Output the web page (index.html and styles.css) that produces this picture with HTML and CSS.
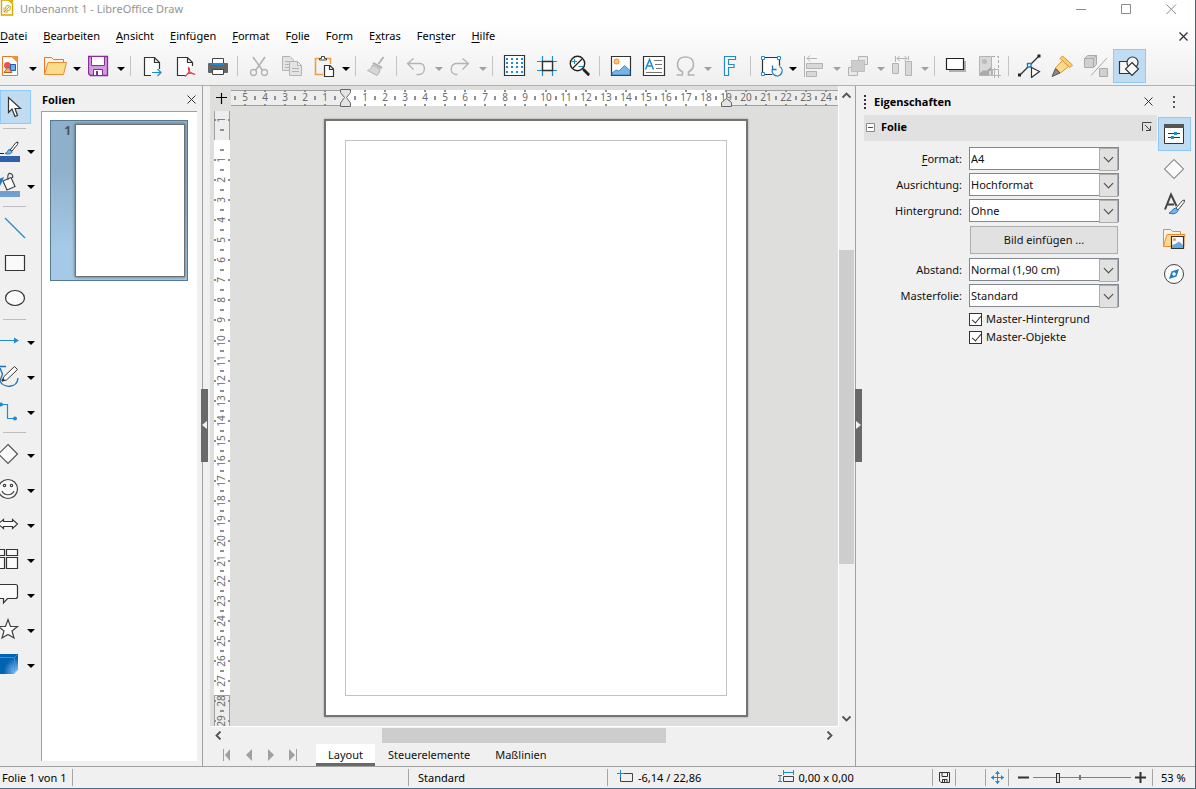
FILE: index.html
```html
<!DOCTYPE html>
<html lang="de">
<head>
<meta charset="utf-8">
<title>Unbenannt 1 - LibreOffice Draw</title>
<link rel="stylesheet" href="styles.css">
</head>
<body>
<header class="head">
  <div class="titlebar">
    <svg class="app-icon" width="14" height="18" viewBox="0 0 14 18"><path d="M2 0H9L12.500 3.500V15H1.500V0" fill="#fff" stroke="#d8a800" stroke-width="1.400"/><path d="M8 0H13V5Z" fill="#e0b400"/><circle cx="8" cy="8" r="2.500" fill="none" stroke="#d8a800"/><path d="M4 12L10 6M4 7.500V12H8" fill="none" stroke="#e09a30"/></svg>
    <span class="title">Unbenannt 1 - LibreOffice Draw</span>
    <div class="winbtns">
      <button aria-label="Minimieren"><svg width="11" height="11"><path d="M0 5.500H10" stroke="#8a8a8a"/></svg></button>
      <button aria-label="Maximieren"><svg width="11" height="11"><path d="M.5 .5H9.500V9.500H.5Z" fill="none" stroke="#8a8a8a"/></svg></button>
      <button aria-label="Schließen"><svg width="11" height="11"><path d="M.5 .5L10 10M10 .5L.5 10" stroke="#8a8a8a"/></svg></button>
    </div>
  </div>
  <nav class="menubar">
    <button><u>D</u>atei</button><button><u>B</u>earbeiten</button><button><u>A</u>nsicht</button><button><u>E</u>infügen</button><button><u>F</u>ormat</button><button>F<u>o</u>lie</button><button>Fo<u>r</u>m</button><button>E<u>x</u>tras</button><button>Fen<u>s</u>ter</button><button><u>H</u>ilfe</button>
    <button class="doc-close" aria-label="Dokument schließen"><svg width="9" height="9"><path d="M.5 .5L8.500 8.500M8.500 .5L.5 8.500" stroke="#333" stroke-width="1.300"/></svg></button>
  </nav>
  <div class="toolbar" role="toolbar" aria-label="Standard">
    <button class="tb" aria-label="Neu"><svg viewBox="0 0 24 24"><path d="M2.500 2.500H12L17.500 8V21.500H2.500Z" fill="#fff" stroke="#e8772a"/><path d="M11 2H18V9Z" fill="#f09030"/><circle cx="7.500" cy="11.500" r="3.500" fill="#e8505a"/><path d="M10.500 10.500H15.500V16.500H10.500Z" fill="#6cb0e8" stroke="#1e5fa8"/><path d="M4 18.500L8 13L12 18.500Z" fill="#f4b070" stroke="#b06020"/></svg></button><button class="dd" aria-label="Neu, Auswahl"></button>
    <button class="tb" aria-label="Öffnen"><svg viewBox="0 0 24 24"><path d="M.5 20.500V3.500H7.500L9.500 5.500H19.500V9" fill="#fdf3e2" stroke="#e8772a"/><path d="M.5 20.500L4 8.500H22.500L19.500 20.500Z" fill="#f9dc8c" stroke="#f08a32"/></svg></button><button class="dd" aria-label="Öffnen, Auswahl"></button>
    <button class="tb" aria-label="Speichern"><svg viewBox="0 0 24 24"><path d="M.5 2.500H19.500V21.500H2.500L.5 19.500Z" fill="#d49ae0" stroke="#8b2a9c" stroke-width="1.300"/><path d="M3.500 2.500H16.500V11.500H3.500Z" fill="#fff" stroke="#8b2a9c"/><path d="M5.500 21V15.500H14.500V21" fill="#fff" stroke="#8b2a9c"/><path d="M8 17H10V21H8Z" fill="#8b2a9c"/></svg></button><button class="dd" aria-label="Speichern, Auswahl"></button>
    <i class="sep"></i>
    <button class="tb" aria-label="Exportieren"><svg viewBox="0 0 24 24"><path d="M11 21.500H4.500V3.500H14.500L19.500 8.500V15M14.500 3.500V8.500H19.500" fill="#fdfdfd" stroke="#333" stroke-width="1.200"/><path d="M12 18.500H21M17.500 15L21 18.500L17.500 22" fill="none" stroke="#1e8bcd" stroke-width="1.200"/></svg></button>
    <button class="tb" aria-label="Als PDF exportieren"><svg viewBox="0 0 24 24"><path d="M12 21.500H4.500V3.500H14.500L19.500 8.500V12M14.500 3.500V8.500H19.500" fill="#fdfdfd" stroke="#333" stroke-width="1.200"/><path d="M12 22.500C17 18 17.500 15 15.500 13.500C15 17 18 19.500 22 20.500C18 17.500 14 20 12 22.500Z" fill="none" stroke="#e0404a" stroke-width="1.200"/></svg></button>
    <button class="tb" aria-label="Drucken"><svg viewBox="0 0 24 24"><path d="M6.500 9.500V4.500H17.500V9.500" fill="#fff" stroke="#444"/><rect x="2" y="9" width="20" height="10" rx="1" fill="#666"/><path d="M6 9H18V11H6Z" fill="#1e8bcd"/><path d="M6.500 15.500H17.500V20.500H6.500Z" fill="#fff" stroke="#444"/></svg></button>
    <i class="sep"></i>
    <button class="tb" aria-label="Ausschneiden"><svg viewBox="0 0 24 24" fill="none" stroke="#b3b3b3" stroke-width="1.300"><path d="M6 3L15.500 16.500M18 3L8.500 16.500" stroke-width="1.600"/><circle cx="6.500" cy="18.500" r="3"/><circle cx="17.500" cy="18.500" r="3"/></svg></button>
    <button class="tb" aria-label="Kopieren"><svg viewBox="0 0 24 24" fill="#e4e4e4" stroke="#b3b3b3"><path d="M2.500 2.500H10L13.500 6V16.500H2.500Z"/><path d="M9.500 7.500H17.500L21.500 11.500V21.500H9.500ZM17.500 7.500V11.500H21.500M12 14.500H19M12 17.500H19M5 7.500H9M5 10.500H9M5 13.500H9"/></svg></button>
    <button class="tb" aria-label="Einfügen"><svg viewBox="0 0 24 24"><path d="M10 20.500H2.500V4.500H17.500V10" fill="none" stroke="#ee9f40" stroke-width="1.600"/><path d="M6.500 6V4.500H8.500V2.500H11.500V4.500H13.500V6Z" fill="#fff" stroke="#444"/><path d="M11.500 11.500H17L20.500 15V22.500H11.500ZM16.500 11.500V15.500H20.500" fill="#fff" stroke="#333" stroke-width="1.200"/></svg></button><button class="dd" aria-label="Einfügen, Auswahl"></button>
    <i class="sep"></i>
    <button class="tb" aria-label="Format übertragen"><svg viewBox="0 0 24 24"><path d="M18.500 3L13.500 10" stroke="#b3b3b3" stroke-width="2"/><path d="M8 9L17 14" stroke="#b3b3b3" stroke-width="2.500"/><path d="M7.500 11C6.500 14.500 5 15.500 2.500 16.500L12 21.500C14 19.500 15 17.500 15 15Z" fill="#d5d5d5" stroke="#b3b3b3"/></svg></button>
    <i class="sep"></i>
    <button class="tb" aria-label="Rückgängig"><svg viewBox="0 0 24 24" fill="none" stroke="#b3b3b3" stroke-width="1.300"><path d="M7.500 4.500L1.500 9.500L7.500 15.500M1.500 9.500H14C20 9.500 20 20.500 13 20.500H10.500"/></svg></button><button class="dd off" aria-label="Rückgängig, Auswahl"></button>
    <button class="tb" aria-label="Wiederherstellen"><svg viewBox="0 0 24 24" fill="none" stroke="#b3b3b3" stroke-width="1.300"><path d="M12.500 4.500L18.500 9.500L12.500 15.500M18.500 9.500H7C0 9.500 -1 19.500 6 20.500H7.500"/></svg></button><button class="dd off" aria-label="Wiederherstellen, Auswahl"></button>
    <i class="sep"></i>
    <button class="tb" aria-label="Raster anzeigen"><svg viewBox="0 0 24 24"><path d="M2.500 1.500H22.500V21.500H2.500Z" fill="#fff" stroke="#333" stroke-width="1.200"/><path d="M4 5H21M4 9H21M4 13H21M4 18H21" stroke="#1e8bcd" stroke-width="2" stroke-dasharray="2 3"/></svg></button>
    <button class="tb" aria-label="Hilfslinien"><svg viewBox="0 0 24 24"><path d="M2 7.500H22M2 16.500H22M7.500 2V22M17.500 2V22" stroke="#1e8bcd" stroke-width="1.200"/><path d="M7.500 7.500H17.500V16.500H7.500Z" fill="#fff" stroke="#333" stroke-width="1.400"/></svg></button>
    <button class="tb" aria-label="Maßstab"><svg viewBox="0 0 24 24"><circle cx="9.500" cy="9.500" r="7.200" fill="#fff" stroke="#222" stroke-width="1.400"/><path d="M5 14L14 5M14.500 14.500L21 21.500" stroke="#222" stroke-width="1.300"/><path d="M15.500 15.500L21 21" stroke="#222" stroke-width="2.800"/><path d="M4 7.500H9M6.500 5V10M10.500 12.500H15" stroke="#1e8bcd" stroke-width="1.200"/></svg></button>
    <i class="sep"></i>
    <button class="tb" aria-label="Bild"><svg viewBox="0 0 24 24"><path d="M2.500 2.500H21.500V21.500H2.500Z" fill="#fff" stroke="#333" stroke-width="1.200"/><path d="M3 21V19L7 16L10 17L15.500 11.500L21 16.500V21Z" fill="#7ab4e6" stroke="#1e7cc0" stroke-width=".8"/><circle cx="7.500" cy="7.500" r="2.500" fill="#f8ca70" stroke="#ee8a30"/></svg></button>
    <button class="tb" aria-label="Textfeld"><svg viewBox="0 0 24 24"><path d="M1.500 2.500H22.500V21.500H1.500Z" fill="#fff" stroke="#333" stroke-width="1.200"/><path d="M3.500 15.500L7.500 5.500L11.500 15.500M5 12H10" fill="none" stroke="#1e8bcd" stroke-width="1.500"/><path d="M12 6.500H20M13 10.500H20M14 14.500H20M4 18.500H20" stroke="#777"/></svg></button>
    <button class="tb" aria-label="Sonderzeichen"><svg viewBox="0 0 24 24" fill="none" stroke="#b3b3b3" stroke-width="1.600"><path d="M1.500 21H7.500V18C0 14 1 3 10.500 3S21 14 13.500 18V21H19.500"/></svg></button><button class="dd off" aria-label="Sonderzeichen, Auswahl"></button>
    <button class="tb" aria-label="Fontwork"><svg viewBox="0 0 24 24"><path d="M5.500 2.500H16.500V5.500H9.500V10.500H15V13.500H9.500V21.500H5.500Z" fill="#fff" stroke="#1e8bcd" stroke-width="1.200"/></svg></button>
    <i class="sep"></i>
    <button class="tb" aria-label="Transformationen"><svg viewBox="0 0 24 24"><path d="M2.500 3.500H19.500V20.500H2.500Z" fill="#fdfdfd" stroke="#333" stroke-width="1.200"/><path d="M1.500 2.500H4.500V5.500H1.500ZM17.500 2.500H20.500V5.500H17.500ZM1.500 18.500H4.500V21.500H1.500Z" fill="#fff" stroke="#1e8bcd"/><circle cx="17" cy="17" r="6" fill="#f6f6f6"/><path d="M19.500 12.500A5 5 0 1 1 12.500 15M12.500 11.500V15.500H16.500" fill="none" stroke="#1e7cc0" stroke-width="1.300"/></svg></button><button class="dd" aria-label="Transformationen, Auswahl"></button>
    <button class="tb" aria-label="Ausrichten"><svg viewBox="0 0 24 24" fill="#d8d8d8" stroke="#b3b3b3"><path d="M.5 2V23M3 4.500H13M6 1.500L3 4.500L6 7.500" fill="none"/><path d="M2.500 9.500H18.500V14.500H2.500ZM2.500 17.500H12.500V22.500H2.500Z"/></svg></button><button class="dd off" aria-label="Ausrichten, Auswahl"></button>
    <button class="tb" aria-label="Anordnen"><svg viewBox="0 0 24 24" fill="#e8e8e8" stroke="#b3b3b3"><path d="M10.500 2.500H19.500V10.500H10.500ZM.500 13.500H9.500V21.500H.5Z"/><path d="M3.500 6.500H16.500V17.500H3.500Z" fill="#cdcdcd" stroke="#c0c0c0"/></svg></button><button class="dd off" aria-label="Anordnen, Auswahl"></button>
    <button class="tb" aria-label="Verteilen"><svg viewBox="0 0 24 24" fill="#d8d8d8" stroke="#b3b3b3"><path d="M.5 9.500H6.500V19.500H.5ZM13.500 7.500H19.500V21.500H13.500Z"/><path d="M3.500 2V8M16.500 2V6M5 4.500H15M7.500 2L5 4.500L7.500 7M12.500 2L15 4.500L12.500 7" fill="none"/></svg></button><button class="dd off" aria-label="Verteilen, Auswahl"></button>
    <i class="sep"></i>
    <button class="tb" aria-label="Schatten"><svg viewBox="0 0 24 24"><path d="M5 7H22V18H5Z" fill="#b0b0b0"/><path d="M2.500 4.500H19.500V15.500H2.500Z" fill="#fff" stroke="#222" stroke-width="1.200"/></svg></button>
    <button class="tb" aria-label="Zuschneiden"><svg viewBox="0 0 24 24"><path d="M2.500 2.500H14.500V21.500H2.500Z" fill="#d8d8d8" stroke="#b3b3b3"/><circle cx="7.500" cy="7.500" r="2.500" fill="#bbb"/><path d="M3 21V19L7 16L9 17L14 13V17H12V21Z" fill="#aaa"/><path d="M15 2.500H21.500V15" fill="none" stroke="#aaa" stroke-dasharray="3 2"/><path d="M17.500 14V24M14 15.500H22M15.500 15.500V21.500H24M21.500 15.500V24" fill="none" stroke="#b3b3b3"/></svg></button>
    <i class="sep"></i>
    <button class="tb" aria-label="Punkte bearbeiten"><svg viewBox="0 0 24 24"><path d="M2 21L21 2" stroke="#333" stroke-width="1.300"/><path d="M0 19.500H3V22.500H0ZM19.500 .5H22.500V3.500H19.500Z" fill="#222"/><path d="M9.500 9.500H13V13H9.500Z" fill="#fff" stroke="#1e7cc0" stroke-width="1.400"/><path d="M13.500 13.500V23.500L21.500 17.500Z" fill="#fff" stroke="#333" stroke-width="1.200"/></svg></button>
    <button class="tb" aria-label="Klebepunkte"><svg viewBox="0 0 24 24"><path d="M11.500 2L21.500 11L19 13.500L9 4.500Z" fill="#f9d26a" stroke="#f08a32"/><path d="M11.500 6.500L17.500 12.500L9.500 19L4.500 14Z" fill="#f9dc8c" stroke="#f08a32"/><path d="M4.500 14.500L9 19L1 22.500Z" fill="#888" stroke="#555"/></svg></button>
    <button class="tb" aria-label="Extrusion"><svg viewBox="0 0 24 24" fill="#d0d0d0" stroke="#aaa"><path d="M.5 4.500L3.500 1.500H12.500V10.500L9.500 13.500H.5ZM.5 4.500H9.500V13.500M9.500 4.500L12.500 1.500"/><path d="M7 21.500L23 4"/><path d="M15.500 14.500H23.500V22.500H15.500Z"/></svg></button>
    <button class="tb on" aria-label="Zeichenfunktionen"><svg viewBox="0 0 24 24" fill="#f8f8f8" stroke="#333" stroke-width="1.200"><path d="M2.500 7.500H14.500V19.500H2.500Z"/><circle cx="15.500" cy="8.500" r="5.500"/><path d="M15 8.500L21.500 15L15 21.500L8.500 15Z"/></svg></button>
  </div>
</header>

<main class="work">
  <div class="tools" role="toolbar" aria-label="Zeichnung">
    <div class="row"><button class="ic on" aria-label="Auswählen"><svg width="28" height="32" viewBox="0 0 28 32"><path d="M8.500 6.500V21.500L12 18L15 25.500L17.500 24.500L15 17.500H20.500Z" fill="#fff" stroke="#333" stroke-width="1.200"/></svg></button></div>
    <hr>
    <div class="row"><button class="ic" aria-label="Linienfarbe"><svg width="28" height="34" viewBox="0 -1 28 34"><path d="M0 19.500H4" stroke="#222"/><path d="M10 16L16 8.500L18 8L17.500 10.500L12 17Z" fill="#fff" stroke="#333"/><path d="M5 19.500C8 19 7 16.500 9 15.500L12 17.500C12 20 8 20.500 5 19.500Z" fill="#7ab4e6" stroke="#1e6fb0"/><path d="M0 22H20V28H0Z" fill="#2f62a8"/></svg></button><button class="dd" aria-label="Linienfarbe, Auswahl"></button></div>
    <div class="row"><button class="ic" aria-label="Füllfarbe"><svg width="28" height="34" viewBox="0 -1 28 34"><path d="M0 9.500L4 8L2 13L0 17Z" fill="#1e7cc0"/><path d="M3 12L11 8.500L15 17.500L7 21Z" fill="#fff" stroke="#444" stroke-width="1.200"/><path d="M8 11C7 5 9 4 10.500 4.500S13 7 12.500 9" fill="none" stroke="#444" stroke-width="1.200"/><path d="M0 22H20V28H0Z" fill="#729fcf"/></svg></button><button class="dd" aria-label="Füllfarbe, Auswahl"></button></div>
    <hr>
    <div class="row"><button class="ic" aria-label="Linie"><svg width="28" height="34" viewBox="0 0 28 34"><path d="M5 7L25 27" stroke="#1e8bcd" stroke-width="1.200"/></svg></button></div>
    <div class="row"><button class="ic" aria-label="Rechteck"><svg width="28" height="34" viewBox="0 0 28 34"><path d="M5.500 9.500H24.500V24.500H5.500Z" fill="#fafafa" stroke="#333" stroke-width="1.200"/></svg></button></div>
    <div class="row"><button class="ic" aria-label="Ellipse"><svg width="28" height="34" viewBox="0 0 28 34"><ellipse cx="15" cy="17" rx="9.500" ry="7.500" fill="#fafafa" stroke="#333" stroke-width="1.200"/></svg></button></div>
    <hr>
    <div class="row"><button class="ic" aria-label="Linien und Pfeile"><svg width="28" height="34" viewBox="0 0 28 34"><path d="M0 16.500H15" stroke="#1e8bcd"/><path d="M14 13.500L19 16.500L14 19.500Z" fill="#1e8bcd"/></svg></button><button class="dd" aria-label="Linien und Pfeile, Auswahl"></button></div>
    <div class="row"><button class="ic" aria-label="Kurven und Polygone"><svg width="28" height="34" viewBox="0 0 28 34"><path d="M0 7.500H6M0 9L2.500 15L0 22C3 29 17 30 18 19" fill="none" stroke="#1e6fb0" stroke-width="1.300"/><path d="M2 22L4 17.500L14.500 7.500L17.500 10.500L6.500 21Z" fill="#fff" stroke="#333"/><path d="M2 22L4 20Z" stroke="#333" stroke-width="2"/></svg></button><button class="dd" aria-label="Kurven, Auswahl"></button></div>
    <div class="row"><button class="ic" aria-label="Verbinder"><svg width="28" height="34" viewBox="0 0 28 34"><path d="M0 10.500H7.500V24.500H15" fill="none" stroke="#1e8bcd" stroke-width="1.200"/><circle cx="1" cy="10.500" r="2" fill="#1e8bcd"/><circle cx="15" cy="24.500" r="2" fill="#1e8bcd"/></svg></button><button class="dd" aria-label="Verbinder, Auswahl"></button></div>
    <hr>
    <div class="row"><button class="ic" aria-label="Standardformen"><svg width="28" height="34" viewBox="0 0 28 34"><path d="M8 7.500L17.500 17L8 26.500L-1.500 17Z" fill="#fafafa" stroke="#555" stroke-width="1.200"/></svg></button><button class="dd" aria-label="Standardformen, Auswahl"></button></div>
    <div class="row"><button class="ic" aria-label="Symbolformen"><svg width="28" height="34" viewBox="0 0 28 34" fill="none" stroke="#444" stroke-width="1.200"><circle cx="8" cy="17" r="9.500" fill="#fafafa"/><circle cx="4.500" cy="13.500" r="1.200"/><circle cx="11.500" cy="13.500" r="1.200"/><path d="M2 19C4 24 12 24 14 19"/></svg></button><button class="dd" aria-label="Symbolformen, Auswahl"></button></div>
    <div class="row"><button class="ic" aria-label="Blockpfeile"><svg width="28" height="34" viewBox="0 0 28 34"><path d="M-2 17L3.500 12.500V14.500H12.500V12.500L17.500 17L12.500 21.500V19.500H3.500V21.500Z" fill="#fafafa" stroke="#333" stroke-width="1.100"/></svg></button><button class="dd" aria-label="Blockpfeile, Auswahl"></button></div>
    <div class="row"><button class="ic" aria-label="Flussdiagramm"><svg width="28" height="34" viewBox="0 0 28 34" fill="#fafafa" stroke="#333" stroke-width="1.200"><path d="M-2 7.500H4.500V13.500H-2ZM6.500 7.500H17.500V13.500H6.500ZM-2 15.500H4.500V26.500H-2ZM6.500 15.500H17.500V26.500H6.500Z"/></svg></button><button class="dd" aria-label="Flussdiagramm, Auswahl"></button></div>
    <div class="row"><button class="ic" aria-label="Legenden"><svg width="28" height="34" viewBox="0 0 28 34"><path d="M-2 7.500H15.500Q17.500 7.500 17.500 9.500V19.500Q17.500 21.500 15.500 21.500H7.500L3.500 26V21.500H-2" fill="#fafafa" stroke="#333" stroke-width="1.200"/></svg></button><button class="dd" aria-label="Legenden, Auswahl"></button></div>
    <div class="row"><button class="ic" aria-label="Sterne"><svg width="28" height="34" viewBox="0 0 28 34"><path d="M8 7.500L10.500 14.500H17.500L12 19L14 26L8 22.500L2 26L4 19L-1.500 14.500H5.500Z" fill="#fafafa" stroke="#444" stroke-width="1.200"/></svg></button><button class="dd" aria-label="Sterne, Auswahl"></button></div>
    <div class="row"><button class="ic" aria-label="3D-Objekte"><svg width="28" height="34" viewBox="0 0 28 34"><defs><radialGradient id="g3" cx=".9" cy=".9" r=".7"><stop offset="0" stop-color="#8fc0ec"/><stop offset="1" stop-color="#0063b1"/></radialGradient></defs><path d="M0 7H18V23L14 27H0Z" fill="url(#g3)"/><path d="M0 10.500H14.500V24M14.500 10.500L17 8" fill="none" stroke="#3d8fd0"/></svg></button><button class="dd" aria-label="3D-Objekte, Auswahl"></button></div>
  </div>

  <aside class="slides">
    <div class="slides-head"><h2>Folien</h2><button aria-label="Folien schließen"><svg width="9" height="9"><path d="M.5 .5L8.500 8.500M8.500 .5L.5 8.500" stroke="#333"/></svg></button></div>
    <div class="slides-list"><div class="thumb"><span>1</span><div class="mini"></div></div></div>
  </aside>
  <div class="split left"><button class="grip" aria-label="Folienbereich ausblenden"><svg width="7" height="12"><path d="M6 2V10L1 6Z" fill="#f0f0f0"/></svg></button></div>

  <section class="editor">
    <div class="view">
      <div class="corner"><svg width="12" height="12"><path d="M0 4.500H11M5.500 0V11" stroke="#000" stroke-width="1.200"/></svg></div>
      <div class="hr"><svg id="hruler" width="607" height="20"></svg></div>
      <div class="vr"><svg id="vruler" width="16" height="616"></svg></div>
      <div class="canvas"><div class="sheet"><div class="margins"></div></div></div>
    </div>
    <div class="vscroll"><button aria-label="Nach oben"><svg width="9" height="7"><path d="M.5 5.500L4.500 1.500L8.500 5.500" fill="none" stroke="#505050" stroke-width="1.800"/></svg></button><div class="track"><div class="bar"></div></div><button aria-label="Nach unten"><svg width="9" height="7"><path d="M.5 1.500L4.500 5.500L8.500 1.500" fill="none" stroke="#505050" stroke-width="1.800"/></svg></button></div>
    <div class="hscroll"><button aria-label="Nach links"><svg width="7" height="9"><path d="M5.500 .5L1.500 4.500L5.500 8.500" fill="none" stroke="#505050" stroke-width="1.800"/></svg></button><div class="track"><div class="bar"></div></div><button aria-label="Nach rechts"><svg width="7" height="9"><path d="M1.500 .5L5.500 4.500L1.500 8.500" fill="none" stroke="#505050" stroke-width="1.800"/></svg></button></div>
    <div class="tabs">
      <button class="nav" aria-label="Erste Ebene"><svg width="10" height="12"><path d="M1.500 0V12" stroke="#a0a0a0"/><path d="M8 0V12L3 6Z" fill="#a0a0a0"/></svg></button>
      <button class="nav" aria-label="Vorherige Ebene"><svg width="10" height="12"><path d="M8 0V12L2 6Z" fill="#a0a0a0"/></svg></button>
      <button class="nav" aria-label="Nächste Ebene"><svg width="10" height="12"><path d="M2 0V12L8 6Z" fill="#a0a0a0"/></svg></button>
      <button class="nav" aria-label="Letzte Ebene"><svg width="10" height="12"><path d="M1 0V12L7 6Z" fill="#a0a0a0"/><path d="M8.500 0V12" stroke="#a0a0a0"/></svg></button>
      <button class="tab active">Layout</button><button class="tab">Steuerelemente</button><button class="tab">Maßlinien</button>
    </div>
  </section>
  <div class="split right"><button class="grip" aria-label="Seitenleiste ausblenden"><svg width="7" height="12"><path d="M1 2V10L6 6Z" fill="#f0f0f0"/></svg></button></div>

  <aside class="props">
    <div class="deck">
      <div class="deck-head"><svg width="3" height="14"><path d="M1 0V14" stroke="#333" stroke-width="2" stroke-dasharray="2 2"/></svg><h2>Eigenschaften</h2><button aria-label="Seitenleiste schließen"><svg width="9" height="9"><path d="M.5 .5L8.500 8.500M8.500 .5L.5 8.500" stroke="#333"/></svg></button></div>
      <div class="sect"><button aria-label="Folie einklappen"><svg width="9" height="9"><path d="M.5 .5H8.500V8.500H.5Z" fill="#fff" stroke="#8a8a8a"/><path d="M2 4.500H7" stroke="#3050a0"/></svg></button><h3>Folie</h3><button class="more" aria-label="Weitere Optionen"><svg width="10" height="10"><path d="M.5 9V.5H9.500M3 3L8 8M8.500 4V8.500H4" fill="none" stroke="#444"/></svg></button></div>
      <form class="form">
        <label for="f1"><u>F</u>ormat:</label><div class="sel"><select id="f1"><option>A4</option></select></div>
        <label for="f2">Ausrichtung:</label><div class="sel"><select id="f2"><option>Hochformat</option></select></div>
        <label for="f3">Hintergrund:</label><div class="sel"><select id="f3"><option>Ohne</option></select></div>
        <button type="button" class="insert">Bild einfügen ...</button>
        <label for="f4">Abstand:</label><div class="sel"><select id="f4"><option>Normal (1,90 cm)</option></select></div>
        <label for="f5">Masterfolie:</label><div class="sel"><select id="f5"><option>Standard</option></select></div>
        <div class="checks"><label><input type="checkbox" checked>Master-Hintergrund</label><label><input type="checkbox" checked>Master-Objekte</label></div>
      </form>
    </div>
    <div class="sidetabs">
      <button class="dots" aria-label="Einstellungen"><svg width="3" height="14"><path d="M1 0V2M1 5V7M1 10V12" stroke="#555" stroke-width="2"/></svg></button>
      <button class="on" aria-label="Eigenschaften"><svg width="24" height="24"><path d="M2.500 2.500H21.500V21.500H2.500Z" fill="#fff" stroke="#333"/><path d="M2 2H22V6H2Z" fill="#555"/><path d="M6 11.500H18M6 15.500H18" stroke="#333"/><path d="M12 10H15V13H12ZM9 14H12V17H9Z" fill="#1e8bcd"/></svg></button>
      <button aria-label="Formen"><svg width="24" height="24"><path d="M12 2.500L21.500 12L12 21.500L2.500 12Z" fill="#fafafa" stroke="#555"/></svg></button>
      <button aria-label="Formatvorlagen"><svg width="24" height="24"><path d="M3 17.500L9 2.500L14.500 14M5 12.500H12" fill="none" stroke="#444" stroke-width="2"/><path d="M14 16L20.500 8.500L22.500 8L22 10.500L16 18Z" fill="#fff" stroke="#444"/><path d="M7 21C10 20 10 17 13.500 16L16 18.500C15 22 10 22.500 7 21Z" fill="#7ab4e6" stroke="#1e6fb0"/></svg></button>
      <button aria-label="Galerie"><svg width="24" height="24"><path d="M1.500 19.500V2.500H8.500L10.500 4.500H18.500V8" fill="#fdf3e2" stroke="#f08a32"/><path d="M1.500 19.500L5 7.500H23L22 11V19.500Z" fill="#f9dc8c" stroke="#f08a32"/><path d="M9.500 9.500H21.500V21.500H9.500Z" fill="#fff" stroke="#333" stroke-width="1.200"/><path d="M10 21V18L13 17L17 14.500L21 18V21Z" fill="#6aa9e0"/><circle cx="12.500" cy="12.500" r="1.500" fill="#f09a40"/></svg></button>
      <button aria-label="Navigator"><svg width="24" height="24"><circle cx="12" cy="12" r="9.500" fill="#fafafa" stroke="#444"/><path d="M17 7L14.500 14.500L7 17L9.500 9.500Z" fill="#1e7cc0"/><circle cx="12" cy="12" r="1.800" fill="#fff"/></svg></button>
    </div>
  </aside>
</main>

<footer class="status">
  <div class="c1">Folie 1 von 1</div><div class="c2"></div><div class="c3">Standard</div>
  <div class="c4"><span><svg width="17" height="14"><path d="M6 3.500H15.500V11.500H3.500V7" fill="none" stroke="#444"/><path d="M0 3.500H7M3.500 0V7" stroke="#1e8bcd"/></svg>-6,14 / 22,86</span><span><svg width="17" height="14"><path d="M5.500 6.500H15.500V11.500H5.500Z" fill="none" stroke="#444"/><path d="M5.500 0V5M15.500 0V5M5.500 2.500H15.500M0 5.500H4M0 11.500H4M2 5.500V11.500" stroke="#1e8bcd"/></svg>0,00 x 0,00</span></div>
  <div class="mid"><svg width="11" height="11"><path d="M.5 .5H10.500V10.500H2L.5 9ZM3 .5V4.500H8.500V.5M3.500 10V7.500H8V10M5.500 7.500V10" fill="none" stroke="#333"/></svg></div><div class="c6"></div>
  <div class="mid"><svg width="13" height="13"><path d="M0 6.500H13M6.500 0V13" stroke="#1e8bcd"/><path d="M6.500 0L9 3H4ZM6.500 13L9 10H4ZM0 6.500L3 4V9ZM13 6.500L10 4V9Z" fill="#1e8bcd"/></svg></div>
  <div class="zoom"><button aria-label="Verkleinern"><svg width="11" height="11"><path d="M0 5.500H11" stroke="#333" stroke-width="2"/></svg></button><input type="range" aria-label="Maßstab" min="0" max="100" value="24"><button aria-label="Vergrößern"><svg width="11" height="11"><path d="M0 5.500H11M5.500 0V11" stroke="#333" stroke-width="2"/></svg></button></div>
  <div class="pct">53 %</div>
</footer>
<script src="script.js"></script>
</body>
</html>
```
FILE: styles.css
```css
* { box-sizing: border-box; }
body {
  margin: 0;
  height: 100vh;
  display: flex;
  flex-direction: column;
  overflow: hidden;
  background: #f0f0f0;
  color: #111;
  font: 11px/16px "Noto Sans", "Open Sans", sans-serif;
  border-right: 1px solid #4f6470;
  border-bottom: 1px solid #4f7080;
}
button { border: 0; padding: 0; background: none; color: inherit; font: inherit; }
svg { display: block; flex: none; }
h2, h3 { margin: 0; font: 700 11px/16px "Open Sans", "Noto Sans", sans-serif; color: #000; }
u { text-underline-offset: 2px; }

.head { background: linear-gradient(#fff 25%, #efefef); border-bottom: 1px solid #b0b0ae; }
.titlebar { display: flex; align-items: center; height: 18px; color: #949494; }
.app-icon { margin-right: 6px; }
.titlebar .title { flex: 1; }
.winbtns { display: flex; gap: 34px; padding-right: 18px; }
.menubar { display: flex; align-items: center; gap: 16px; height: 20px; margin-top: 8px; color: #000; }
.menubar .doc-close { margin-left: auto; padding-right: 7px; }
.toolbar { display: flex; height: 39px; padding-top: 3px; margin-left: -4px; }
.tb { flex: none; width: 33px; height: 34px; padding-left: 4px; }
.tb svg { width: 24px; height: 24px; }
.on { background: #c0dcf3; box-shadow: inset 0 0 0 1px #90c8f6; }
.dd { flex: none; width: 11px; display: flex; align-items: center; justify-content: center; }
.dd::after { content: ""; margin-top: 3px; border: 4px solid transparent; border-top-color: #000; border-bottom: 0; }
.toolbar .dd { padding-right: 3px; }
.dd.off::after { border-top-color: #a0a0a0; }
.sep { flex: none; width: 1px; height: 20px; margin: 7px 5px 0 2px; background: #c4c4c4; }

.work { flex: 1; min-height: 0; display: flex; }
.tools { width: 41px; flex: none; padding-top: 4px; overflow: hidden; }
.tools .row { display: flex; height: 35px; }
.tools .ic { width: 26px; height: 34px; overflow: hidden; }
.tools .ic.on { width: 31px; }
.tools .dd { width: 10px; }
.tools hr { border: 0; height: 1px; margin: 3px 15px 4px 3px; background: #bdbdbd; }

.slides { flex: none; width: 160px; display: flex; flex-direction: column; padding-bottom: 5px; }
.slides-head { display: flex; align-items: center; justify-content: space-between; height: 25px; padding: 2px 5px 0 1px; }
.slides-list { flex: 1; width: 156px; background: #fff; border: solid #a0a0a0; border-width: 1px 0 0 1px; padding: 8px; }
.thumb { display: flex; justify-content: flex-end; gap: 4px; width: 138px; height: 161px; padding: 3px 2px; border: 1px solid #557a98; background: linear-gradient(#8fb0cb 30%, #a5c9e6 80%); color: #4a5560; }
.thumb span { font-size: 12px; font-weight: 700; line-height: 14px; }
.mini { width: 110px; height: 153px; background: #fff; border: 1px solid #707070; box-shadow: 0 0 3px #506070; }

.split { flex: none; display: flex; align-items: center; padding-bottom: 2px; }
.split .grip { width: 7px; height: 73px; background: #696969; display: flex; align-items: center; }
.split.left { width: 9px; background: linear-gradient(#a0a0a0, #a0a0a0) 1px 0 / 1px 100% no-repeat; }
.split.right { width: 7px; background: linear-gradient(#a0a0a0, #a0a0a0) 0 0 / 1px 100% no-repeat; }

.editor { flex: 1; min-width: 0; display: grid; grid-template: 1fr 17px 22px / 1fr 16px; }
.view { min-width: 0; min-height: 0; overflow: hidden; display: grid; grid-template: 25px 1fr / 21px 1fr; background: #dededc; border: solid #fff; border-width: 0 1px 1px 0; }
.corner { padding: 7px 0 0 6px; }
.hr { overflow: hidden; padding-top: 3px; }
.vr { overflow: hidden; padding-left: 4px; }
.hr svg text, .vr svg text { font-size: 10px; fill: #6a6a6a; text-anchor: middle; }
.canvas { min-height: 0; overflow: hidden; padding: 8px 0 0 93px; }
.sheet { width: 424px; height: 598px; padding: 19px; background: #fff; border: 2px solid #747474; box-shadow: 0 0 2px #999; }
.margins { height: 100%; border: 1px solid #c2c2c2; }
.vscroll { display: flex; flex-direction: column; align-items: center; padding: 6px 1px 5px 0; }
.vscroll .track { flex: 1; width: 15px; padding-top: 151px; }
.vscroll .bar { height: 314px; background: #cdcdcd; }
.hscroll { display: flex; align-items: center; padding: 0 6px 0 5px; }
.hscroll .track { flex: 1; height: 15px; padding-left: 160px; }
.hscroll .bar { width: 284px; height: 15px; background: #cdcdcd; }
.hscroll, .tabs { grid-column: 1; }
.tabs { display: flex; align-items: center; padding-left: 12px; }
.tabs .nav { width: 22px; }
.tabs .tab { align-self: stretch; padding: 0 12px; margin-right: 1px; }
.tabs .nav + .tab { margin-left: 6px; }
.tabs .tab.active { background: #fff; border-bottom: 3px solid #696969; padding-top: 3px; }

.props { flex: none; width: 333px; display: flex; }
.deck { flex: 1; padding: 1px 0 0 2px; }
.deck-head { display: flex; align-items: center; height: 28px; padding: 1px 4px 0 0; }
.deck-head h2 { flex: 1; padding-left: 7px; }
.sect { display: flex; align-items: center; height: 26px; padding: 0 5px 2px 2px; background: #e1e1e1; }
.sect h3 { flex: 1; padding-left: 6px; }
.form { display: grid; grid-template-columns: 98px 150px; column-gap: 7px; row-gap: 3px; padding-top: 6px; align-items: center; }
.form > label { text-align: right; }
.sel { position: relative; }
.sel select { display: block; appearance: none; width: 100%; height: 23px; padding: 0 20px 0 1px; border: 1px solid #828790; border-radius: 0; background: #fff; color: #111; font: inherit; }
.sel::before { content: ""; position: absolute; top: 1px; right: 1px; width: 17px; height: 21px; background: #e1e1e1; border: 1px solid #adadad; pointer-events: none; }
.sel::after { content: ""; position: absolute; top: 7px; right: 7px; width: 6px; height: 6px; border: solid #444; border-width: 0 1px 1px 0; transform: rotate(45deg); pointer-events: none; }
.insert { grid-column: 2; height: 28px; margin: 1px 1px 1px 1px; background: #e1e1e1; border: 1px solid #adadad; }
.checks { grid-column: 2; }
.checks label { display: flex; align-items: center; gap: 4px; height: 18px; white-space: nowrap; }
.checks input { appearance: none; position: relative; width: 13px; height: 13px; margin: 0; border: 1px solid #333; background: #fff; }
.checks input:checked::after { content: ""; position: absolute; left: 4px; top: 0; width: 4px; height: 8px; border: solid #333; border-width: 0 1px 1px 0; transform: rotate(40deg); }
.sidetabs { flex: none; width: 38px; display: flex; flex-direction: column; align-items: center; gap: 1px; padding: 10px 4px 0 0; }
.sidetabs button { width: 33px; height: 34px; display: flex; align-items: center; justify-content: center; }
.sidetabs .dots { height: 20px; align-items: flex-start; }

.status { flex: none; display: grid; grid-template-columns: 73px 336fr 199fr 325fr 23px 30px 23px 144px 42px; align-items: center; height: 22px; border-top: 1px solid #a0a0a0; color: #000; }
.status > div { height: 17px; display: flex; align-items: center; border-right: 1px solid #a5a5a5; white-space: nowrap; }
.status .c1 { padding-left: 2px; }
.status .c3 { padding-left: 9px; }
.status .c4 > span { flex: 1; display: flex; gap: 4px; padding-left: 9px; }
.status .c4 > span + span { padding-left: 6px; }
.status .mid { justify-content: center; }
.status .zoom { justify-content: space-between; padding: 0 6px 0 9px; }
.zoom input { appearance: none; width: 98px; height: 11px; margin: 0; background: linear-gradient(#777, #777) 46px 50% / 2px 5px no-repeat, linear-gradient(#808080, #808080) 0 50% / 100% 1px no-repeat; }
.zoom input::-webkit-slider-thumb { appearance: none; width: 4px; height: 10px; border: 1px solid #333; background: #ddd; }
.status .pct { border: 0; padding-left: 8px; }
```
FILE: script.js
```js
const NS = 'http://www.w3.org/2000/svg';
const CM = 20.05;

function add(svg, tag, attrs, text) {
  const el = document.createElementNS(NS, tag);
  for (const k in attrs) el.setAttribute(k, attrs[k]);
  if (text !== undefined) el.textContent = text;
  svg.appendChild(el);
}

function ruler(svg, vertical, zero, length, from, to, span) {
  const r = (a, b, w, h, fill) =>
    add(svg, 'rect', vertical ? { x: b, y: a, width: h, height: w, fill } : { x: a, y: b, width: w, height: h, fill });
  const end = Math.round(zero + span);
  r(0, 0, length, 16, '#a0a0a0');
  r(0, 1, zero, 14, '#ededed');
  r(end + 1, 1, length - end, 14, '#ededed');
  r(zero, 0, end - zero, 16, '#fff');
  for (let n = from; n <= to; n++) {
    const p = Math.round(zero + n * CM);
    r(Math.round(p + CM / 2) - 1, 6, 2, 4, '#909090');
    if (n === 0 || p < 8) continue;
    r(p - 1, 0, 2, 2, '#909090');
    r(p - 1, 14, 2, 2, '#909090');
    if (vertical) add(svg, 'text', { transform: `translate(11 ${p}) rotate(-90)` }, Math.abs(n));
    else add(svg, 'text', { x: p, y: 11 }, Math.abs(n));
  }
}

const h = document.getElementById('hruler');
ruler(h, false, 114, 607, -6, 24, 381);
const wrap = document.createElementNS(NS, 'g');
while (h.firstChild) wrap.appendChild(h.firstChild);
wrap.setAttribute('transform', 'translate(0 1)');
h.appendChild(wrap);
add(h, 'path', { d: 'M109.500 .5H119.500V3.500L115.500 8.500L119.500 14V17.500H109.500V14L113.500 8.500L109.500 3.500Z', fill: '#e4e4e4', stroke: '#666' });
add(h, 'path', { d: 'M490.500 17.500V13.500L495.500 9.500L500.500 13.500V17.500Z', fill: '#e4e4e4', stroke: '#666' });
ruler(document.getElementById('vruler'), true, 29, 616, -2, 29, 555);
```
